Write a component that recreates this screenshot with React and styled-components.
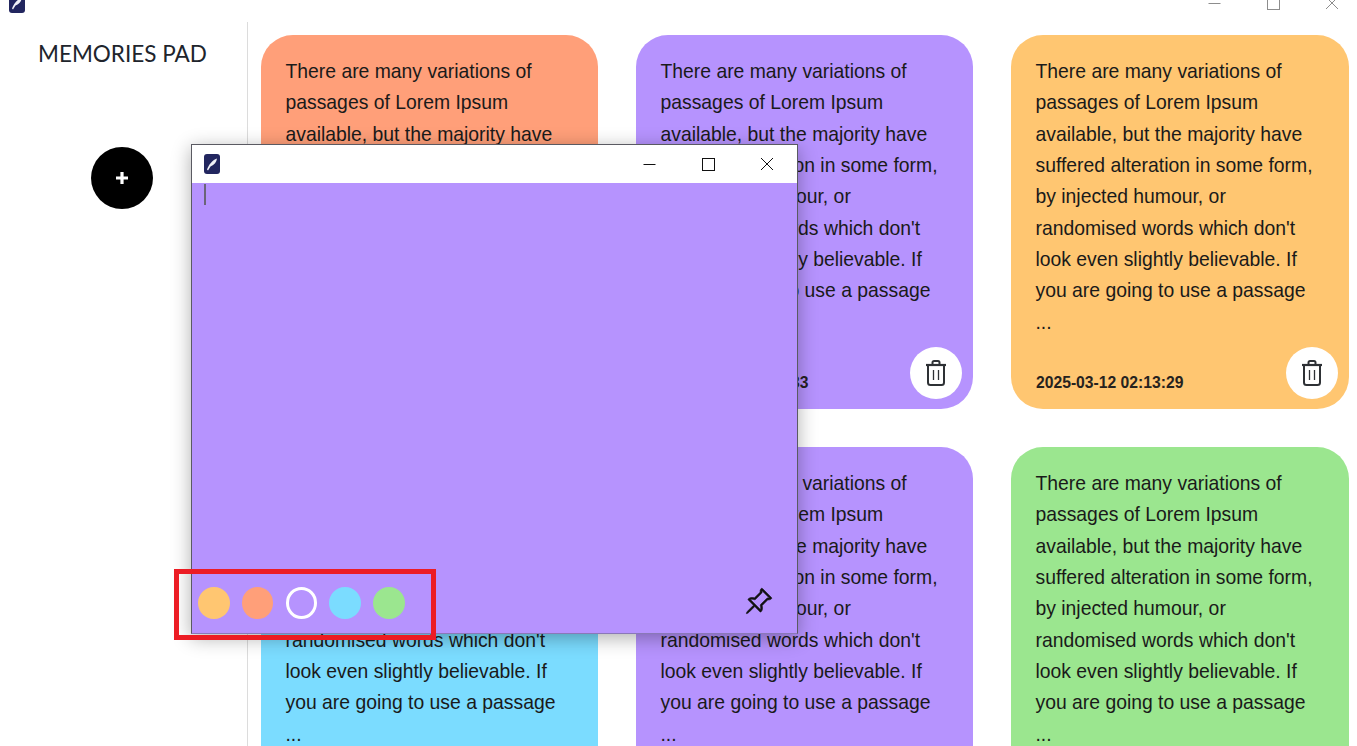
import React from "react";
import styled, { createGlobalStyle } from "styled-components";
import { BsPinAngle } from "react-icons/bs";

const Global = createGlobalStyle`
  html, body { margin: 0; padding: 0; height: 100%; background: #fff; overflow: hidden; }
  body { font-family: "Liberation Sans", Arial, sans-serif; color: #1d1d1d; }
`;

const Page = styled.div`
  position: relative;
  width: 1357px;
  height: 746px;
  overflow: hidden;
  display: flex;
  flex-direction: column;
`;

const TitleBar = styled.header`
  flex: none;
  height: 38px;
  margin: ${(p) => (p.$clipped ? "-16px -4px 0" : "0")};
  padding: ${(p) => (p.$clipped ? "0 0 0 13px" : "0 1px 0 12px")};
  display: flex;
  align-items: center;
  justify-content: space-between;
  background: #fff;
`;

const Controls = styled.div`
  display: flex;
  color: ${(p) => p.$color};
`;

const ControlButton = styled.span`
  width: 58.5px;
  height: 38px;
  display: flex;
  align-items: center;
  justify-content: center;
`;

const AppIconSvg = () => (
  <svg width="16" height="20" viewBox="0 0 16 20">
    <rect width="16" height="20" rx="3" fill="#22265f" />
    <path d="M3 15.5C5 10.5 8 6.5 13 4.5C12.5 8 10.5 11 6.5 12.5L4 16.5Z" fill="#f1f2f8" />
  </svg>
);

const WindowControls = ({ color }) => (
  <Controls $color={color}>
    <ControlButton>
      <svg width="13" height="13" viewBox="0 0 13 13"><path d="M0.5 6.5H12.5" stroke="currentColor" fill="none" /></svg>
    </ControlButton>
    <ControlButton>
      <svg width="13" height="13" viewBox="0 0 13 13"><rect x="0.5" y="0.5" width="12" height="12" stroke="currentColor" fill="none" /></svg>
    </ControlButton>
    <ControlButton>
      <svg width="14" height="14" viewBox="0 0 14 14"><path d="M1 1L13 13M13 1L1 13" stroke="currentColor" fill="none" /></svg>
    </ControlButton>
  </Controls>
);

const Shell = styled.div`
  flex: 1;
  min-height: 0;
  display: flex;
`;

const Sidebar = styled.aside`
  flex: none;
  width: 247px;
  border-right: 1px solid #dcdcdc;
  display: flex;
  flex-direction: column;
  align-items: center;
`;

const Brand = styled.h1`
  margin: 17px 2px 0 0;
  font: 400 22.5px/30px Lato, sans-serif;
  color: #20242c;
  white-space: nowrap;
`;

const AddButton = styled.button`
  margin: 78px 3px 0 0;
  width: 62px;
  height: 62px;
  border: none;
  border-radius: 50%;
  background: #000;
  display: flex;
  align-items: center;
  justify-content: center;
  padding: 0;
`;

const Board = styled.main`
  flex: 1;
  min-width: 0;
  padding: 13px 0 0 13px;
  display: grid;
  grid-template-columns: 337px 337px 338px;
  grid-auto-rows: 374px;
  gap: 38px;
`;

const Card = styled.article`
  position: relative;
  background: ${(p) => p.$bg};
  border-radius: 32px;
  padding: 21px 25px 0 24.5px;
`;

const CardText = styled.p`
  margin: 0;
  font-size: 19.35px;
  line-height: 31.35px;
  color: #1a1a1a;
`;

const Stamp = styled.time`
  position: absolute;
  left: 25px;
  bottom: 18px;
  font-size: 15.7px;
  font-weight: 700;
  line-height: 17px;
  color: #26221e;
`;

const DeleteButton = styled.button`
  position: absolute;
  right: 11px;
  bottom: 10px;
  width: 52px;
  height: 52px;
  padding: 0;
  border: none;
  border-radius: 50%;
  background: #fff;
  display: flex;
  align-items: center;
  justify-content: center;
  color: #2e3135;
`;

const NoteWindow = styled.section`
  position: absolute;
  left: 191px;
  top: 144px;
  width: 607px;
  height: 490px;
  box-sizing: border-box;
  border: 1px solid #5a5a62;
  border-bottom-color: #8a78b8;
  display: flex;
  flex-direction: column;
  background: #b693fe;
  box-shadow: 0 4px 18px rgba(0, 0, 0, 0.32);
`;

const NoteBody = styled.div`
  flex: 1;
  padding: 1px 12px 0;
`;

const Caret = styled.span`
  display: block;
  width: 2px;
  height: 21px;
  background: #6b6478;
`;

const NoteFooter = styled.div`
  flex: none;
  display: flex;
  align-items: center;
  justify-content: space-between;
  padding: 0 24px 14px 6px;
`;

const Swatches = styled.div`
  display: flex;
  gap: 12.25px;
`;

const Swatch = styled.span`
  box-sizing: border-box;
  width: 31.5px;
  height: 32px;
  border-radius: 50%;
  background: ${(p) => p.$color};
  border: ${(p) => (p.$active ? "3px solid #fff" : "none")};
`;

const PinButton = styled.span`
  display: flex;
  color: #111;
  font-size: 29px;
  margin-bottom: 3px;

  svg {
    stroke: currentColor;
    stroke-width: 0.35;
  }
`;

const Annotation = styled.div`
  position: absolute;
  left: 174px;
  top: 569px;
  width: 262px;
  height: 71px;
  box-sizing: border-box;
  border: 5px solid #ec1c24;
  pointer-events: none;
`;

const TEXT =
  "There are many variations of passages of Lorem Ipsum available, but the majority have suffered alteration in some form, by injected humour, or randomised words which don't look even slightly believable. If you are going to use a passage ...";

const NOTES = [
  { bg: "#ff9f79", at: "2025-03-12 02:13:33" },
  { bg: "#b693fe", at: "2025-03-12 02:13:33" },
  { bg: "#ffc671", at: "2025-03-12 02:13:29" },
  { bg: "#7bdcff", at: "2025-03-12 02:13:25" },
  { bg: "#b693fe", at: "2025-03-12 02:13:21" },
  { bg: "#9be68f", at: "2025-03-12 02:13:18" },
];

const TrashIcon = () => (
  <svg width="22" height="26" viewBox="0 0 22 26" fill="none" stroke="currentColor" strokeWidth="2">
    <path d="M1 5H21" strokeWidth="2.2" />
    <path d="M7.5 5V2.5C7.5 1.6 8.1 1 9 1H13C13.9 1 14.5 1.6 14.5 2.5V5" />
    <path d="M3 5V22.5C3 23.9 4.1 25 5.5 25H16.5C17.9 25 19 23.9 19 22.5V5" />
    <path d="M8.5 10V20M13.5 10V20" strokeWidth="1.3" />
  </svg>
);

const SWATCHES = ["#ffc671", "#ff9f79", "transparent", "#7bdcff", "#9be68f"];

export default function App() {
  return (
    <Page>
      <Global />
      <TitleBar $clipped>
        <AppIconSvg />
        <WindowControls color="#8d8d8d" />
      </TitleBar>
      <Shell>
        <Sidebar>
          <Brand>MEMORIES PAD</Brand>
          <AddButton aria-label="Add">
            <svg width="14" height="14" viewBox="0 0 14 14">
              <path d="M7 1V13M1 7H13" stroke="#fff" strokeWidth="3.2" />
            </svg>
          </AddButton>
        </Sidebar>
        <Board>
          {NOTES.map((n, i) => (
            <Card key={i} $bg={n.bg}>
              <CardText>{TEXT}</CardText>
              <Stamp>{n.at}</Stamp>
              <DeleteButton aria-label="Delete"><TrashIcon /></DeleteButton>
            </Card>
          ))}
        </Board>
      </Shell>
      <NoteWindow>
        <TitleBar>
          <AppIconSvg />
          <WindowControls color="#111" />
        </TitleBar>
        <NoteBody><Caret /></NoteBody>
        <NoteFooter>
          <Swatches>
            {SWATCHES.map((c, i) => (
              <Swatch key={i} $color={c} $active={c === "transparent"} />
            ))}
          </Swatches>
          <PinButton><BsPinAngle /></PinButton>
        </NoteFooter>
      </NoteWindow>
      <Annotation />
    </Page>
  );
}
